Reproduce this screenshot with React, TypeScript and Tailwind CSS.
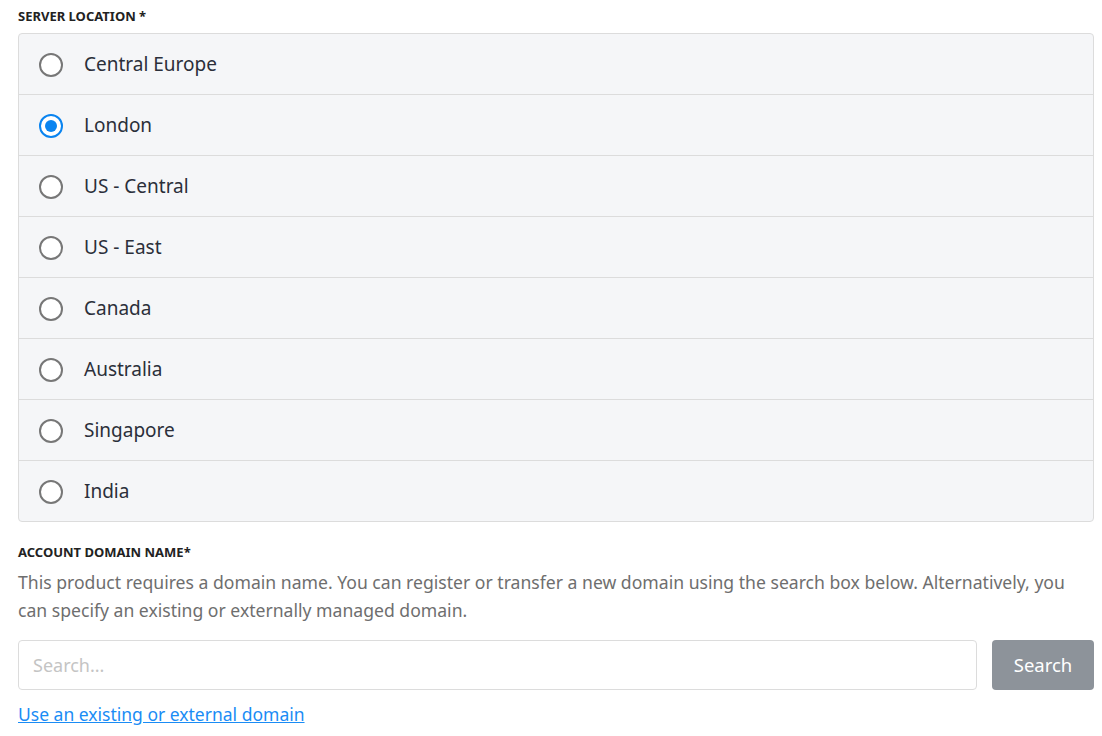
import { useState } from "react";

const locations = [
  "Central Europe",
  "London",
  "US - Central",
  "US - East",
  "Canada",
  "Australia",
  "Singapore",
  "India",
];

export default function App() {
  const [selected, setSelected] = useState("London");

  return (
    <div className="pl-[18px] pr-[8px] pt-[8px] font-['Noto_Sans',sans-serif] bg-white">
      {/* Server location */}
      <div className="text-[13px] font-bold text-[#222] uppercase leading-[16px] mb-[9px]">
        Server Location *
      </div>
      <div className="rounded-[4px] border border-[#dcdcdc] bg-[#f5f6f8] overflow-hidden">
        {locations.map((loc, i) => (
          <label
            key={loc}
            className={
              "flex items-center h-[59px] px-[20px] pt-[1px] cursor-pointer box-content" +
              (i > 0 ? " border-t border-[#dcdcdc]" : "")
            }
            onClick={() => setSelected(loc)}
          >
            <span
              className={
                "h-[24px] w-[24px] rounded-full flex items-center justify-center bg-white " +
                (selected === loc ? "border-[2px] border-[#0a84f0]" : "border-[2px] border-[#777]")
              }
            >
              {selected === loc && <span className="h-[12px] w-[12px] rounded-full bg-[#0a84f0]" />}
            </span>
            <span className="ml-[21px] text-[19px] text-[#2b2f3a]">{loc}</span>
          </label>
        ))}
      </div>

      {/* Account domain */}
      <div className="mt-[22px] text-[13px] font-bold text-[#222] uppercase leading-[16px]">
        Account Domain Name*
      </div>
      <p className="mt-[8px] text-[17.6px] leading-[28px] text-[#6e6e6e]">
        This product requires a domain name. You can register or transfer a new domain using the search box below. Alternatively, you can specify an existing or externally managed domain.
      </p>
      <div className="flex gap-[15px] mt-[16px]">
        <input
          placeholder="Search..."
          className="flex-1 h-[50px] rounded-[4px] border border-[#dcdcdc] px-[14px] text-[18px] placeholder:text-[#c4c4c4] outline-none"
        />
        <button className="w-[102px] h-[50px] rounded-[4px] bg-[#8d939a] text-white text-[18.5px]">
          Search
        </button>
      </div>
      <a href="#" className="block mt-[12px] text-[17.5px] text-[#1a8cf5] underline leading-[24px]">
        Use an existing or external domain
      </a>
    </div>
  );
}
